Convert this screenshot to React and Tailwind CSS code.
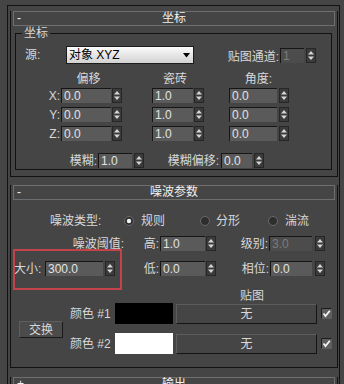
const font = "font-['Liberation_Sans','Noto_Sans_CJK_SC',sans-serif]";

function Field({ w, value, dim }) {
  return (
    <div
      className={`${w} h-[15px] flex items-center pl-[2px] border-t border-l border-[#161616] text-[12px] leading-none ${
        dim ? 'bg-[#4c4c4c] text-[#7c7c7c]' : 'bg-[#5a5a5a] text-[#e2e2e2]'
      }`}
    >
      {value}
    </div>
  );
}

function Arrows({ className = '' }) {
  return (
    <svg className={`shrink-0 ${className}`} width="10" height="15" viewBox="0 0 10 15">
      <rect x="0" y="0" width="10" height="15" fill="#3b3b3b" />
      <rect x="0.5" y="0.5" width="9" height="14" fill="none" stroke="#262626" />
      <path d="M2 6.5 L5 3 L8 6.5 Z" fill="#d6d6d6" />
      <path d="M2 8.5 L5 12 L8 8.5 Z" fill="#d6d6d6" />
    </svg>
  );
}

function Radio({ on, className = '' }) {
  return (
    <svg className={`shrink-0 ${className}`} width="10" height="10" viewBox="0 0 10 10">
      <circle cx="5" cy="5" r="4.5" fill="#2e2e2e" stroke="#6a6a6a" strokeWidth="1" />
      {on && <circle cx="5" cy="5" r="2.2" fill="#f2f2f2" />}
    </svg>
  );
}

function Check({ className = '' }) {
  return (
    <svg className={`shrink-0 ${className}`} width="11" height="11" viewBox="0 0 11 11">
      <rect x="0" y="0" width="11" height="11" fill="#5e5e5e" />
      <path d="M0.5 10.5 V0.5 H10.5" fill="none" stroke="#1c1c1c" />
      <path d="M2.5 5.5 L4.5 8 L8.8 2.8" fill="none" stroke="#f4f4f4" strokeWidth="1.8" />
    </svg>
  );
}

function Title({ text, sign = '-' }) {
  return (
    <div className="-mt-[7px] ml-[2px] w-[322px] h-[15px] border border-[#6e6e6e] bg-[#454545] flex items-center relative">
      <span className="absolute left-[3px] top-[-1px] text-[12px] leading-[14px] text-[#f0f0f0]">{sign}</span>
      <span className="flex-1 text-center text-[12px] leading-[13px] text-[#f0f0f0]">{text}</span>
    </div>
  );
}

function CoordRow({ axis, a, b, c }) {
  return (
    <div className="flex items-center h-[15px]">
      <div className="w-[45px] text-right pr-[1px] text-[12px] leading-none">{axis}:</div>
      <Field w="w-[50px]" value={a} />
      <Arrows className="ml-[1px]" />
      <Field w="w-[41px] ml-[30px]" value={b} />
      <Arrows className="ml-[1px]" />
      <Field w="w-[48px] ml-[25px]" value={c} />
      <Arrows className="ml-[2px]" />
    </div>
  );
}

export default function App() {
  return (
    <div className={`w-[344px] h-[384px] overflow-hidden bg-[#454545] text-[#d8d8d8] text-[12px] ${font}`}>
      <div className="mt-[5px] ml-[7px] w-[333px] h-[400px] border-t border-l border-r border-[#121212]">
        {/* 坐标 rollout */}
        <div className="mt-[12px] ml-[2px] w-[328px] border-l border-r border-b border-[#121212]">
          <Title text="坐标" />
          <div className="mt-[7px] ml-[4px] w-[317px] border border-[#121212] pb-[1px]">
            <div className="-mt-[8px] ml-[6px] w-fit px-[2px] h-[14px] leading-[14px] bg-[#454545]">坐标</div>
            <div className="mt-[6px] flex items-center h-[18px]">
              <div className="ml-[9px] w-[41px] leading-none">源:</div>
              <div className="w-[128px] h-[18px] border border-[#1c1c1c] bg-gradient-to-b from-[#fbfbfb] to-[#d2d2d2] flex items-center pl-[2px] text-black leading-none">
                <span className="flex-1">对象 XYZ</span>
                <svg width="7" height="5" viewBox="0 0 7 5" className="mr-[3px]">
                  <path d="M0 0 H7 L3.5 4.5 Z" fill="#000" />
                </svg>
              </div>
              <div className="w-[85px] text-right leading-none mt-[3px]">贴图通道:</div>
              <Field w="w-[24px] ml-[1px]" value="1" dim />
              <Arrows className="ml-[2px]" />
            </div>
            <div className="mt-[8px] flex items-center h-[14px] leading-none">
              <div className="ml-[46px] w-[53px] text-center">偏移</div>
              <div className="ml-[35px] w-[50px] text-center">瓷砖</div>
              <div className="ml-[33px] w-[51px] text-center">角度:</div>
            </div>
            <div className="mt-[2px] flex flex-col gap-[4px]">
              <CoordRow axis="X" a="0.0" b="1.0" c="0.0" />
              <CoordRow axis="Y" a="0.0" b="1.0" c="0.0" />
              <CoordRow axis="Z" a="0.0" b="1.0" c="0.0" />
            </div>
            <div className="mt-[12px] flex items-center h-[15px]">
              <div className="w-[82px] text-right pr-[1px] leading-none">模糊:</div>
              <Field w="w-[34px]" value="1.0" />
              <Arrows className="ml-[2px]" />
              <div className="w-[77px] text-right pr-[2px] leading-none">模糊偏移:</div>
              <Field w="w-[31px]" value="0.0" />
              <Arrows className="ml-[2px]" />
            </div>
          </div>
          <div className="h-[6px]" />
        </div>

        {/* 噪波参数 rollout */}
        <div className="mt-[15px] ml-[2px] w-[328px] border-l border-r border-b border-[#121212] relative">
          <Title text="噪波参数" />
          <div className="mt-[14px] flex items-center h-[14px] leading-none">
            <div className="ml-[39px] w-[63px]">噪波类型:</div>
            <Radio on className="ml-[11px]" />
            <div className="ml-[7px] w-[24px]">规则</div>
            <Radio className="ml-[35px]" />
            <div className="ml-[6px] w-[24px]">分形</div>
            <Radio className="ml-[28px]" />
            <div className="ml-[7px] w-[24px]">湍流</div>
          </div>
          <div className="mt-[8px] flex items-center h-[15px] leading-none">
            <div className="w-[113px] text-right">噪波阈值:</div>
            <div className="w-[35px] text-right">高:</div>
            <Field w="w-[45px] ml-[1px]" value="1.0" />
            <Arrows className="ml-[1px]" />
            <div className="w-[52px] text-right">级别:</div>
            <Field w="w-[43px] ml-[1px]" value="3.0" dim />
            <Arrows className="ml-[3px]" />
          </div>
          <div className="mt-[10px] flex items-center h-[15px] leading-none">
            <div className="ml-[3px] w-[31px]">大小:</div>
            <Field w="w-[58px]" value="300.0" />
            <Arrows className="ml-[2px]" />
            <div className="w-[44px] text-right">低:</div>
            <Field w="w-[45px] ml-[1px]" value="0.0" />
            <Arrows className="ml-[1px]" />
            <div className="w-[53px] text-right">相位:</div>
            <Field w="w-[42px] ml-[1px]" value="0.0" />
            <Arrows className="ml-[3px]" />
          </div>
          <div className="mt-[14px] h-[13px] leading-[13px] flex">
            <div className="ml-[229px] w-[24px] text-center">贴图</div>
          </div>
          <div className="flex items-start">
            <div className="ml-[8px] mt-[18px] w-[44px] h-[17px] bg-[#4b4b4b] border-t border-l border-[#5e5e5e] border-r-[#1a1a1a] border-b-[#1a1a1a] border-r border-b flex items-center justify-center leading-none">
              交换
            </div>
            <div className="flex flex-col gap-[9px]">
              <div className="flex items-center h-[21px]">
                <div className="ml-[7px] w-[45px] leading-none">颜色 #1</div>
                <div className="w-[58px] h-[21px] bg-black" />
                <div className="ml-[3px] w-[141px] h-[20px] border border-[#5c5c5c] border-r-[#141414] border-b-[#141414] flex items-center justify-center leading-none">无</div>
                <Check className="ml-[4px]" />
              </div>
              <div className="flex items-center h-[21px]">
                <div className="ml-[7px] w-[45px] leading-none">颜色 #2</div>
                <div className="w-[58px] h-[21px] bg-white" />
                <div className="ml-[3px] w-[141px] h-[20px] border border-[#5c5c5c] border-r-[#141414] border-b-[#141414] flex items-center justify-center leading-none">无</div>
                <Check className="ml-[4px]" />
              </div>
            </div>
          </div>
          <div className="h-[13px]" />
          {/* red annotation frame drawn over the 大小 row */}
          <div className="absolute left-[2px] top-[64px] w-[109px] h-[41px] border-2 border-[#c4424a] pointer-events-none" />
        </div>

        {/* 输出 rollout */}
        <div className="mt-[16px] ml-[2px] w-[328px] border-l border-r border-[#121212] h-[20px]">
          <Title text="输出" sign="+" />
        </div>
      </div>
    </div>
  );
}
